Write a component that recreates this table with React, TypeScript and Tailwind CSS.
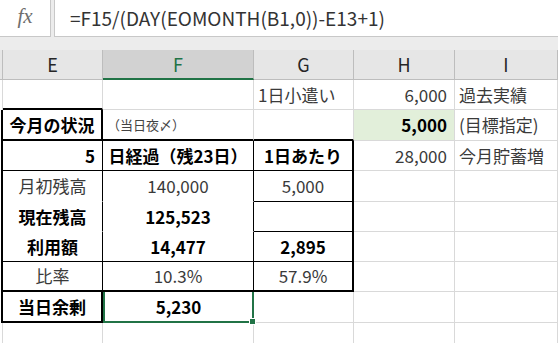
import type { ReactNode } from 'react';

type Edge = 'g' | 'k' | 'K' | 'n';

const rightEdge: Record<Edge, string> = {
  g: 'border-r border-r-[#d9d9d9]',
  k: 'border-r border-r-black',
  K: 'border-r-2 border-r-black',
  n: 'border-r border-r-white',
};

const bottomEdge: Record<Edge, string> = {
  g: 'border-b border-b-[#d9d9d9]',
  k: 'border-b border-b-black',
  K: 'border-b-2 border-b-black',
  n: 'border-b border-b-white',
};

const CELL_FONT = 'font-["Noto_Sans_CJK_JP","Noto_Sans",sans-serif]';

interface CellProps {
  w: string;
  r?: Edge;
  b?: Edge;
  align?: 'left' | 'center' | 'right';
  bg?: string;
  className?: string;
  children?: ReactNode;
}

function Cell({ w, r = 'g', b = 'g', align = 'left', bg = 'bg-white', className = '', children }: CellProps) {
  const justify =
    align === 'center' ? 'justify-center' : align === 'right' ? 'justify-end pr-[7px]' : 'justify-start pl-[4px]';
  return (
    <div
      className={`${w} h-full shrink-0 flex items-center whitespace-nowrap overflow-hidden ${bg} ${justify} ${rightEdge[r]} ${bottomEdge[b]} ${className}`}
    >
      {children}
    </div>
  );
}

// 行の高さはシート上の実寸
function Row({ h, children }: { h: string; children: ReactNode }) {
  return <div className={`flex ${h}`}>{children}</div>;
}

// 左端の行番号列（見えているのは右の縁だけ）
function Gutter({ thick = false, children }: { thick?: boolean; children?: ReactNode }) {
  return (
    <div
      className={`w-[3px] h-full shrink-0 relative bg-white ${
        thick ? 'border-r-2 border-r-black' : 'border-r border-r-[#d9d9d9]'
      }`}
    >
      {children}
    </div>
  );
}

const E = 'w-[100px]';
const F = 'w-[151px]';
const G = 'w-[100px]';
const H = 'w-[101px]';
const I = 'w-[103px]';

const normal = 'text-[17px] text-[#3a3a3a]';
const bold = 'text-[17px] font-bold text-black';

function ColumnHeader({ w, label, active = false }: { w: string; label: string; active?: boolean }) {
  return (
    <div
      className={`${w} h-full shrink-0 flex items-center justify-center text-[18px] border-r border-r-[#bdbdbd] ${
        active
          ? 'bg-[#d2d2d2] text-[#217346] border-b-2 border-b-[#217346]'
          : 'bg-[#e6e6e6] text-[#262626] border-b border-b-[#bdbdbd]'
      }`}
    >
      {label}
    </div>
  );
}

export default function App() {
  return (
    <div className={`w-[558px] h-[343px] overflow-hidden bg-white ${CELL_FONT}`}>
      {/* 数式バー */}
      <div className="flex h-[37px] bg-[#ececec]">
        <div className="w-[51px] shrink-0 flex items-center justify-center bg-white border-r border-b border-[#c8c8c8]">
          <span className='font-["Liberation_Serif",serif] italic text-[21px] text-[#6e6e6e] pb-[2px]'>fx</span>
        </div>
        <div className="w-[3px] shrink-0" />
        <div className="flex-1 flex items-center pl-[15px] bg-white border-l border-b border-[#c8c8c8]">
          <span className='font-["Noto_Sans_CJK_JP",sans-serif] text-[19px] text-[#333]'>
            =F15/(DAY(EOMONTH(B1,0))-E13+1)
          </span>
        </div>
      </div>
      <div className="h-[13px] bg-[#ececec]" />

      {/* 列見出し */}
      <div className='flex h-[30px] font-["Noto_Sans_CJK_JP",sans-serif]'>
        <div className="w-[3px] h-full shrink-0 bg-[#e6e6e6] border-r border-r-[#bdbdbd] border-b border-b-[#bdbdbd]" />
        <ColumnHeader w={E} label="E" />
        <ColumnHeader w={F} label="F" active />
        <ColumnHeader w={G} label="G" />
        <ColumnHeader w={H} label="H" />
        <ColumnHeader w={I} label="I" />
      </div>

      {/* 1 */}
      <Row h="h-[30px]">
        <Gutter />
        <Cell w={E} b="K" />
        <Cell w={F} />
        <Cell w={G} className={normal}>1日小遣い</Cell>
        <Cell w={H} align="right" className={normal}>6,000</Cell>
        <Cell w={I} className={normal}>過去実績</Cell>
      </Row>

      {/* 2 */}
      <Row h="h-[31px]">
        <Gutter thick />
        <Cell w={E} r="K" b="K" align="center" className={bold}>今月の状況</Cell>
        <Cell w={F} b="K" className="text-[13px] text-[#444] pl-0">（当日夜〆）</Cell>
        <Cell w={G} b="K" />
        <Cell w={H} align="right" bg="bg-[#e2efda]" className={bold}>5,000</Cell>
        <Cell w={I} className={normal}>(目標指定)</Cell>
      </Row>

      {/* 3 */}
      <Row h="h-[30px]">
        <Gutter thick />
        <Cell w={E} r="k" b="k" align="right" className={`${bold} pr-[3px]`}>5</Cell>
        <Cell w={F} r="k" b="k" align="center" className={bold}>日経過（残23日）</Cell>
        <Cell w={G} r="K" b="k" align="center" className={bold}>1日あたり</Cell>
        <Cell w={H} align="right" className={normal}>28,000</Cell>
        <Cell w={I} className={normal}>今月貯蓄増</Cell>
      </Row>

      {/* 4 */}
      <Row h="h-[31px]">
        <Gutter thick />
        <Cell w={E} r="k" b="n" align="center" className={normal}>月初残高</Cell>
        <Cell w={F} r="k" b="n" align="center" className={normal}>140,000</Cell>
        <Cell w={G} r="K" b="k" align="center" className={normal}>5,000</Cell>
        <Cell w={H} />
        <Cell w={I} />
      </Row>

      {/* 5 */}
      <Row h="h-[30px]">
        <Gutter thick>
          <span className="absolute left-[-2px] top-[13px] w-[2px] h-[8px] bg-[#54448f]" />
        </Gutter>
        <Cell w={E} r="k" b="n" align="center" className={bold}>現在残高</Cell>
        <Cell w={F} r="k" b="n" align="center" className={bold}>125,523</Cell>
        <Cell w={G} r="K" b="k" />
        <Cell w={H} />
        <Cell w={I} />
      </Row>

      {/* 6 */}
      <Row h="h-[30px]">
        <Gutter thick />
        <Cell w={E} r="k" b="k" align="center" className={bold}>利用額</Cell>
        <Cell w={F} r="k" b="k" align="center" className={bold}>14,477</Cell>
        <Cell w={G} r="K" b="k" align="center" className={bold}>2,895</Cell>
        <Cell w={H} />
        <Cell w={I} />
      </Row>

      {/* 7 */}
      <Row h="h-[30px]">
        <Gutter thick />
        <Cell w={E} r="k" b="K" align="center" className={normal}>比率</Cell>
        <Cell w={F} r="k" b="K" align="center" className={normal}>10.3%</Cell>
        <Cell w={G} r="K" b="K" align="center" className={normal}>57.9%</Cell>
        <Cell w={H} />
        <Cell w={I} />
      </Row>

      {/* 8 */}
      <Row h="h-[31px]">
        <Gutter thick />
        <Cell w={E} r="K" b="K" align="center" className={bold}>当日余剰</Cell>
        {/* 選択中のセル */}
        <div className={`${F} h-full shrink-0 relative flex items-center justify-center bg-white border-2 border-t-0 border-[#217346] ${bold}`}>
          5,230
          <span className="absolute right-[-4px] bottom-[-4px] w-[7px] h-[7px] bg-[#217346] border border-white" />
        </div>
        <Cell w={G} />
        <Cell w={H} />
        <Cell w={I} />
      </Row>

      {/* 9 */}
      <Row h="h-[30px]">
        <Gutter />
        <Cell w={E} />
        <Cell w={F} />
        <Cell w={G} />
        <Cell w={H} />
        <Cell w={I} />
      </Row>
    </div>
  );
}
